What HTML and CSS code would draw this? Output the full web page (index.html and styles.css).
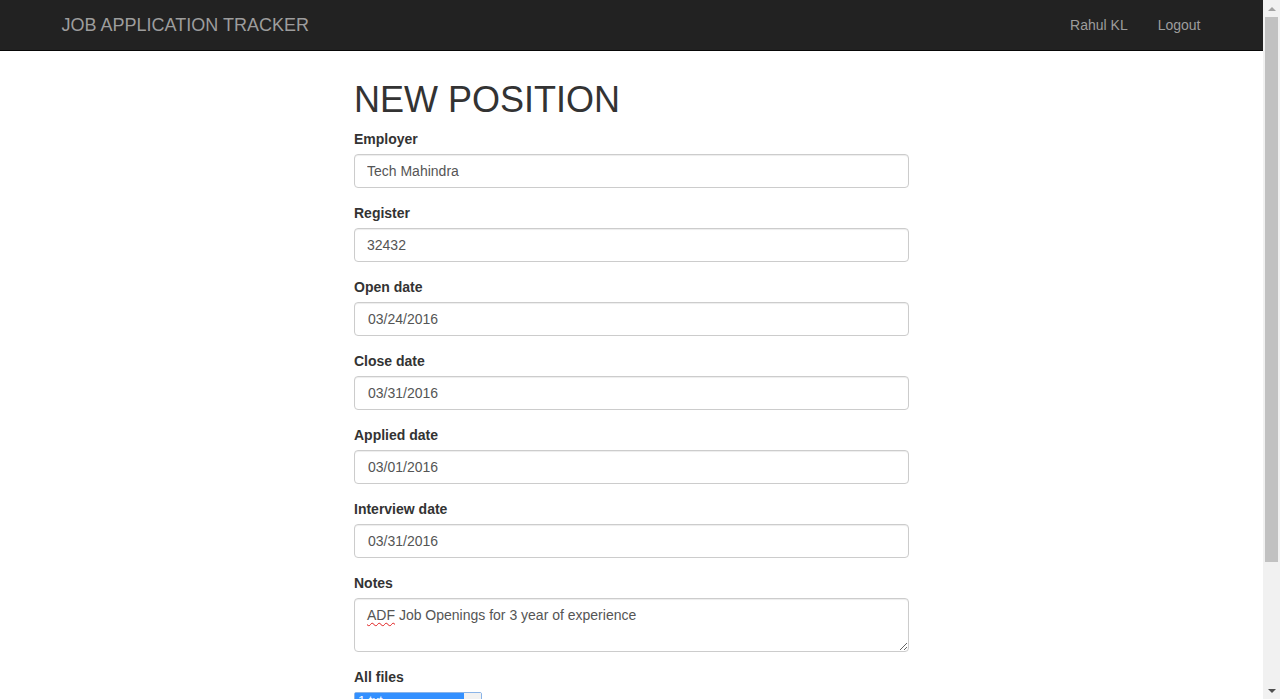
FILE: index.html
```html
<!DOCTYPE html>
<html lang="en">
<head>
<meta charset="utf-8">
<title>Job Application Tracker</title>
<link rel="stylesheet" href="styles.css">
</head>
<body>
<div class="window">
  <div class="page">
    <nav class="navbar">
      <div class="nav-container">
        <a class="brand" href="#">JOB APPLICATION TRACKER</a>
        <ul class="nav-right">
          <li><a href="#">Rahul KL</a></li>
          <li><a href="#">Logout</a></li>
        </ul>
      </div>
    </nav>
    <main class="content">
      <div class="form-col">
        <h1 class="title">NEW POSITION</h1>
        <div class="form-group">
          <label class="label">Employer</label>
          <input class="control" type="text" value="Tech Mahindra">
        </div>
        <div class="form-group">
          <label class="label">Register</label>
          <input class="control" type="text" value="32432">
        </div>
        <div class="form-group">
          <label class="label">Open date</label>
          <input class="control date" type="text" value="03/24/2016">
        </div>
        <div class="form-group">
          <label class="label">Close date</label>
          <input class="control date" type="text" value="03/31/2016">
        </div>
        <div class="form-group">
          <label class="label">Applied date</label>
          <input class="control date" type="text" value="03/01/2016">
        </div>
        <div class="form-group">
          <label class="label">Interview date</label>
          <input class="control date" type="text" value="03/31/2016">
        </div>
        <div class="form-group">
          <label class="label">Notes</label>
          <div class="control textarea"><span class="misspelled">ADF</span> Job Openings for 3 year of experience</div>
        </div>
        <div class="form-group">
          <label class="label">All files</label>
          <div class="file-list">
            <div class="file-options">
              <div class="file-option selected">1.txt</div>
              <div class="file-option">2.txt</div>
            </div>
            <div class="file-scroll"></div>
          </div>
        </div>
      </div>
    </main>
  </div>
  <div class="scrollbar">
    <div class="sb-arrow up"></div>
    <div class="sb-track"><div class="sb-thumb"></div></div>
    <div class="sb-arrow down"></div>
  </div>
</div>
</body>
</html>
```

FILE: styles.css
```css
html, body {
  margin: 0;
  padding: 0;
  height: 699px;
  overflow: hidden;
  background: #fff;
}

body {
  font-family: "Liberation Sans", Arial, Helvetica, sans-serif;
  font-size: 14px;
  line-height: 20px;
  color: #333;
}

.window {
  display: flex;
  height: 699px;
}

.page {
  flex: 1;
  min-width: 0;
  overflow: hidden;
}

/* Navbar */
.navbar {
  height: 50px;
  background: #222;
  border-bottom: 1px solid #080808;
}

.nav-container {
  width: 1170px;
  margin: 0 auto;
  padding: 0 15px;
  box-sizing: border-box;
  display: flex;
  justify-content: space-between;
  align-items: flex-start;
}

.brand {
  display: block;
  padding: 15px 15px;
  margin-left: -15px;
  font-size: 18px;
  line-height: 20px;
  color: #9d9d9d;
  text-decoration: none;
}

.nav-right {
  display: flex;
  list-style: none;
  margin: 0 -14px 0 0;
  padding: 0;
}

.nav-right a {
  display: block;
  padding: 15px;
  line-height: 20px;
  color: #9d9d9d;
  text-decoration: none;
}

/* Content */
.content {
  width: 1170px;
  margin: 0 auto;
  padding-top: 29px;
}

.form-col {
  width: 50%;
  margin-left: 25%;
  padding: 0 15px;
  box-sizing: border-box;
}

.title {
  margin: 0 0 9px;
  font-size: 36px;
  font-weight: 500;
  line-height: 39.6px;
  color: #333;
}

.form-group {
  margin-bottom: 15px;
}

.label {
  display: block;
  margin-bottom: 5px;
  font-weight: bold;
  color: #333;
}

.control {
  display: block;
  width: 100%;
  height: 34px;
  box-sizing: border-box;
  padding: 6px 12px;
  font-family: inherit;
  font-size: 14px;
  line-height: 20px;
  color: #555;
  background: #fff;
  border: 1px solid #ccc;
  border-radius: 4px;
  box-shadow: inset 0 1px 1px rgba(0, 0, 0, 0.075);
  margin: 0;
}

.control.date {
  padding-left: 13px;
}

.textarea {
  height: 54px;
  resize: vertical;
  overflow: auto;
}

.misspelled {
  text-decoration: underline wavy #e02020;
  text-decoration-thickness: 1px;
  text-underline-offset: 2px;
}

/* multi select lookalike */
.file-list {
  width: 128px;
  height: 70px;
  box-sizing: border-box;
  border: 1px solid #8ab4e8;
  border-radius: 2px;
  display: flex;
  background: #fff;
}

.file-options {
  flex: 1;
}

.file-option {
  font-size: 13px;
  line-height: 16px;
  padding: 0 3px;
  color: #333;
}

.file-option.selected {
  background: #3390ff;
  color: #fff;
}

.file-scroll {
  width: 17px;
  background: #f1f1f1;
}

/* fake window scrollbar */
.scrollbar {
  width: 17px;
  flex: none;
  background: #f1f1f1;
  display: flex;
  flex-direction: column;
}

.sb-arrow {
  height: 17px;
  flex: none;
  display: flex;
  align-items: center;
  justify-content: center;
}

.sb-arrow::before {
  content: "";
  width: 0;
  height: 0;
  border-left: 4px solid transparent;
  border-right: 4px solid transparent;
}

.sb-arrow.up::before {
  border-bottom: 4px solid #a3a3a3;
}

.sb-arrow.down::before {
  border-top: 4px solid #505050;
}

.sb-track {
  flex: 1;
  padding: 0 2px;
}

.sb-thumb {
  height: 545px;
  background: #c1c1c1;
}
```
